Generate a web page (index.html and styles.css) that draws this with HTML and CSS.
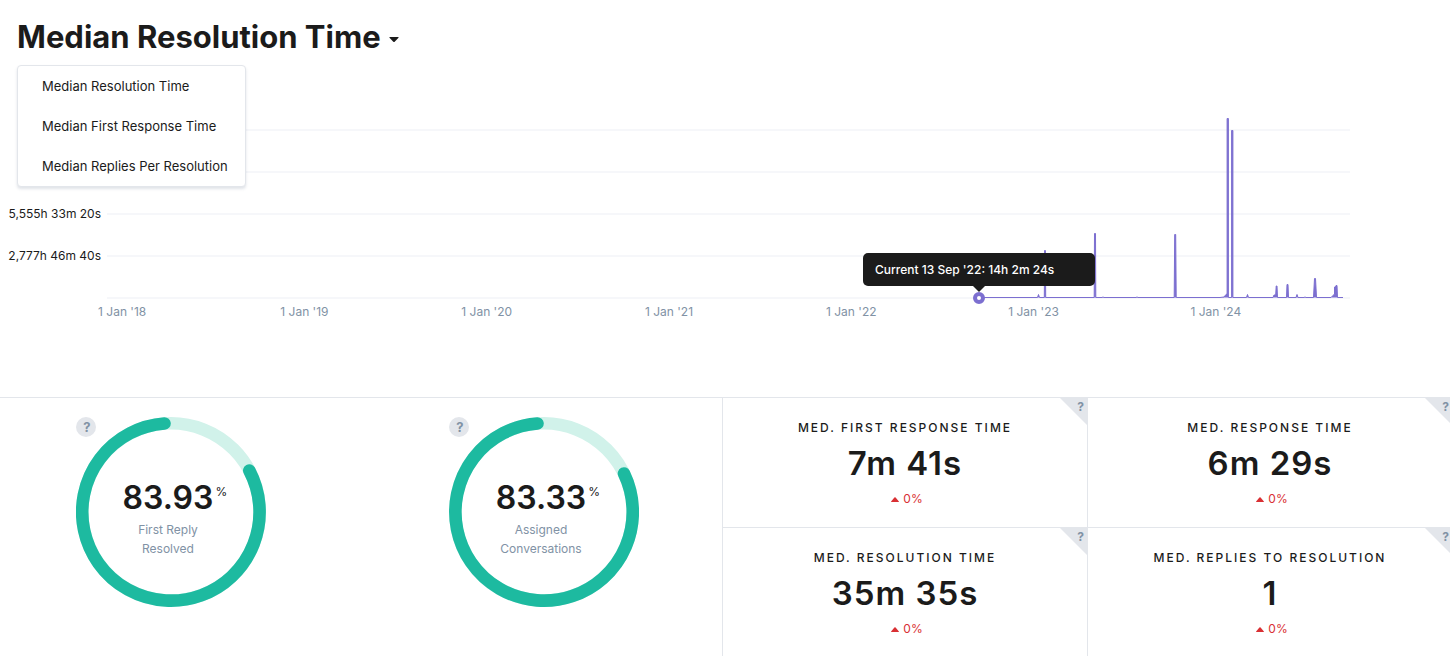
FILE: index.html
```html
<!DOCTYPE html>
<html lang="en">
<head>
<meta charset="utf-8">
<title>Median Resolution Time</title>
<link rel="stylesheet" href="styles.css">
</head>
<body>
<header class="report-header">
  <h1 class="report-title">
    <button class="title-toggle" type="button" aria-haspopup="true" aria-expanded="true">Median Resolution Time<svg class="caret" width="10" height="6" viewBox="0 0 10 6" aria-hidden="true"><path d="M1 0h8q1 0 .5 .7L5.7 4.700q-.7 .7-1.4 0L.5 .7Q0 0 1 0z"/></svg></button>
  </h1>
  <div class="menu">
    <button class="menu-item" type="button">Median Resolution Time</button>
    <button class="menu-item" type="button">Median First Response Time</button>
    <button class="menu-item" type="button">Median Replies Per Resolution</button>
  </div>
</header>

<section class="chart">
  <div class="y-axis">
    <span>5,555h 33m 20s</span>
    <span>2,777h 46m 40s</span>
  </div>
  <div class="plot">
    <svg class="plot-svg" viewBox="0 0 1243 190" preserveAspectRatio="none" aria-hidden="true">
      <path class="grid-line" d="M0 20H1243M0 62H1243M0 104H1243M0 146H1243M0 188H1243"/>
      <path class="area" d="M872 187.500H930.500L931.500 184.500L932.500 187.500H937.300L937.600 140.500H938.400L938.700 187.500H987.200L987.500 123.500H988.500L988.800 187.500H995L996 187L997 187.500H1029L1030 187L1031 187.500H1067.200L1067.700 124.500H1068.700L1069.200 187.500H1113L1117 187L1119 184.500L1120.100 184V8.500H1121.400V187.500H1124.600V20.500H1125.900V187.500H1139.500L1140.500 184.500L1141.500 187.500H1166L1167 185H1168.700L1169.200 176H1170L1170.500 187.500H1179.500L1180 174.500H1181L1181.500 187.500H1189L1190 184.500L1191 187.500H1197L1198 187L1199 187.500H1206.500L1207.500 168.500H1208.500L1209.500 187.500H1224L1226 185.500L1227.500 184V177H1228.500L1229 175.500H1230L1230.500 187.500H1236"/>
    </svg>
    <span class="marker"></span>
    <div class="tooltip" role="tooltip">Current 13 Sep '22: 14h 2m 24s</div>
  </div>
  <div class="x-axis">
    <span>1 Jan '18</span><span>1 Jan '19</span><span>1 Jan '20</span><span>1 Jan '21</span><span>1 Jan '22</span><span>1 Jan '23</span><span>1 Jan '24</span>
  </div>
</section>

<section class="metrics">
  <div class="metrics-grid">
    <div class="rings">
      <div class="ring">
        <svg class="ring-svg" viewBox="0 0 190 190" aria-hidden="true">
          <circle class="ring-track" cx="95" cy="95" r="88.700"/>
          <path class="ring-value" d="M173.300 53.500A88.700 88.700 0 1 1 88.500 6.500"/>
        </svg>
        <button class="help-dot" type="button">?</button>
        <div class="ring-text">
          <strong class="ring-number">83.93<span class="ring-unit">%</span></strong>
          <span class="ring-label">First Reply<br>Resolved</span>
        </div>
      </div>
      <div class="ring">
        <svg class="ring-svg" viewBox="0 0 190 190" aria-hidden="true">
          <circle class="ring-track" cx="95" cy="95" r="88.700"/>
          <path class="ring-value" d="M175 56.500A88.700 88.700 0 1 1 88.500 6.500"/>
        </svg>
        <button class="help-dot" type="button">?</button>
        <div class="ring-text">
          <strong class="ring-number">83.33<span class="ring-unit">%</span></strong>
          <span class="ring-label">Assigned<br>Conversations</span>
        </div>
      </div>
    </div>
    <div class="cards">
      <article class="card">
        <button class="help-corner" type="button">?</button>
        <h2 class="card-title">Med. First Response Time</h2>
        <p class="card-value">7m 41s</p>
        <p class="card-change"><svg class="up" width="8" height="5" viewBox="0 0 8 5" aria-hidden="true"><path d="M.6 5Q-.3 5 .3 4.300L3.400 .6Q4 0 4.600 .6L7.700 4.300Q8.300 5 7.400 5z"/></svg>0%</p>
      </article>
      <article class="card">
        <button class="help-corner" type="button">?</button>
        <h2 class="card-title">Med. Response Time</h2>
        <p class="card-value">6m 29s</p>
        <p class="card-change"><svg class="up" width="8" height="5" viewBox="0 0 8 5" aria-hidden="true"><path d="M.6 5Q-.3 5 .3 4.300L3.400 .6Q4 0 4.600 .6L7.700 4.300Q8.300 5 7.400 5z"/></svg>0%</p>
      </article>
      <article class="card">
        <button class="help-corner" type="button">?</button>
        <h2 class="card-title">Med. Resolution Time</h2>
        <p class="card-value">35m 35s</p>
        <p class="card-change"><svg class="up" width="8" height="5" viewBox="0 0 8 5" aria-hidden="true"><path d="M.6 5Q-.3 5 .3 4.300L3.400 .6Q4 0 4.600 .6L7.700 4.300Q8.300 5 7.400 5z"/></svg>0%</p>
      </article>
      <article class="card">
        <button class="help-corner" type="button">?</button>
        <h2 class="card-title">Med. Replies to Resolution</h2>
        <p class="card-value">1</p>
        <p class="card-change"><svg class="up" width="8" height="5" viewBox="0 0 8 5" aria-hidden="true"><path d="M.6 5Q-.3 5 .3 4.300L3.400 .6Q4 0 4.600 .6L7.700 4.300Q8.300 5 7.400 5z"/></svg>0%</p>
      </article>
    </div>
  </div>
</section>
</body>
</html>
```
FILE: styles.css
```css
* {
  box-sizing: border-box;
}

body {
  margin: 0;
  background: #fff;
  color: #1b1b1b;
  font-family: Inter, "Liberation Sans", sans-serif;
  font-size: 12px;
}

button {
  margin: 0;
  padding: 0;
  border: 0;
  background: none;
  color: inherit;
  font: inherit;
  cursor: pointer;
}

/* Header and metric menu */
.report-header {
  position: relative;
  padding: 16px 17px;
}

.report-title {
  margin: 0;
  font-size: 31px;
  font-weight: 700;
  line-height: 42px;
}

.title-toggle {
  display: flex;
  align-items: center;
  gap: 8px;
}

.caret {
  margin-top: 5px;
  fill: #1b1b1b;
}

.menu {
  position: absolute;
  z-index: 2;
  top: 65px;
  left: 17px;
  display: flex;
  flex-direction: column;
  border: 1px solid #e3e6eb;
  border-radius: 4px;
  background: #fff;
  box-shadow: 0 2px 3px rgba(60, 80, 110, 0.16);
}

.menu-item {
  padding: 0 17px 0 24px;
  font-size: 13px;
  line-height: 40px;
  text-align: left;
  white-space: nowrap;
}

/* Chart */
.chart {
  display: grid;
  grid-template-columns: 107px 1fr;
  padding: 36px 100px 73px 0;
}

.y-axis {
  display: flex;
  flex-direction: column;
  justify-content: flex-end;
  padding: 0 6px 23px 0;
  line-height: 42px;
  text-align: right;
  white-space: nowrap;
}

.plot {
  position: relative;
}

.plot-svg {
  display: block;
  width: 100%;
  height: 190px;
}

.grid-line {
  fill: none;
  stroke: #f6f7fa;
  stroke-width: 2px;
  vector-effect: non-scaling-stroke;
}

.area {
  fill: #7c6fd0;
  stroke: #7c6fd0;
  stroke-width: 1px;
  vector-effect: non-scaling-stroke;
}

.marker {
  position: absolute;
  top: 182px;
  left: 70.15%;
  width: 12px;
  height: 12px;
  margin-left: -6px;
  border: 4px solid #7c6fd0;
  border-radius: 50%;
  background: #fff;
}

.tooltip {
  position: absolute;
  top: 143px;
  left: 70.15%;
  width: 232px;
  margin-left: -116px;
  padding: 0 12px;
  border-radius: 5px;
  background: #1b1b1b;
  color: #fff;
  font-weight: 500;
  line-height: 33px;
}

.tooltip::after {
  content: "";
  position: absolute;
  top: 100%;
  left: 50%;
  margin-left: -6px;
  border: 6px solid transparent;
  border-top-color: #1b1b1b;
  border-bottom: 0;
}

.x-axis {
  grid-column: 1 / -1;
  display: grid;
  grid-template-columns: repeat(7, 1fr);
  padding: 0 43px 0 31px;
  color: #8192a5;
  line-height: 24px;
  text-align: center;
}

/* Metrics */
.metrics {
  overflow: hidden;
  border-top: 1px solid #e3e6eb;
}

.metrics-grid {
  display: grid;
  grid-template-columns: 722fr 730fr;
  margin-right: -2px;
}

.rings {
  display: flex;
  gap: 183px;
  padding: 19px 0 0 76px;
}

.ring {
  position: relative;
  display: grid;
  width: 190px;
  height: 190px;
}

.ring-svg {
  grid-area: 1 / 1;
}

.ring-track,
.ring-value {
  fill: none;
  stroke-width: 12.6px;
}

.ring-track {
  stroke: #d1f2ea;
}

.ring-value {
  stroke: #1dbaa0;
  stroke-linecap: round;
}

.help-dot {
  position: absolute;
  top: 0;
  left: 0;
  width: 20px;
  height: 20px;
  padding-left: 2px;
  border-radius: 50%;
  background: #e3e6eb;
  color: #8192a5;
  font-size: 13px;
  font-weight: 700;
  line-height: 20px;
}

.ring-text {
  grid-area: 1 / 1;
  display: flex;
  flex-direction: column;
  align-items: center;
  padding: 59px 6px 0 0;
  text-align: center;
}

.ring-number {
  position: relative;
  font-size: 32px;
  font-weight: 600;
  line-height: 44px;
}

.ring-unit {
  position: absolute;
  top: 8px;
  left: 100%;
  margin-left: 2px;
  font-size: 12px;
  font-weight: 400;
  line-height: 16px;
}

.ring-label {
  color: #8192a5;
  font-size: 12px;
  line-height: 19px;
}

.cards {
  display: grid;
  grid-template-columns: 1fr 1fr;
}

.card {
  position: relative;
  min-height: 129px;
  padding: 20px 0 19px;
  border-left: 1px solid #e3e6eb;
  text-align: center;
}

.card:nth-child(-n + 2) {
  border-bottom: 1px solid #e3e6eb;
}

.card-title {
  margin: 0;
  font-size: 12px;
  font-weight: 500;
  letter-spacing: 2px;
  line-height: 20px;
  text-transform: uppercase;
}

.card-value {
  margin: 4px 0 6px;
  font-size: 33px;
  font-weight: 600;
  letter-spacing: 1px;
  line-height: 42px;
}

.card-change {
  display: flex;
  align-items: center;
  justify-content: center;
  gap: 4px;
  margin: 0;
  padding-left: 4px;
  color: #d93034;
  font-size: 12px;
  line-height: 18px;
}

.up {
  fill: #d93034;
}

.help-corner {
  position: absolute;
  top: 0;
  right: 0;
  width: 27px;
  height: 27px;
  padding: 0 3px 9px 0;
  background: #e3e6eb;
  clip-path: polygon(0 0, 100% 0, 100% 100%);
  color: #8192a5;
  font-size: 12px;
  font-weight: 700;
  line-height: 18px;
  text-align: right;
}
```
